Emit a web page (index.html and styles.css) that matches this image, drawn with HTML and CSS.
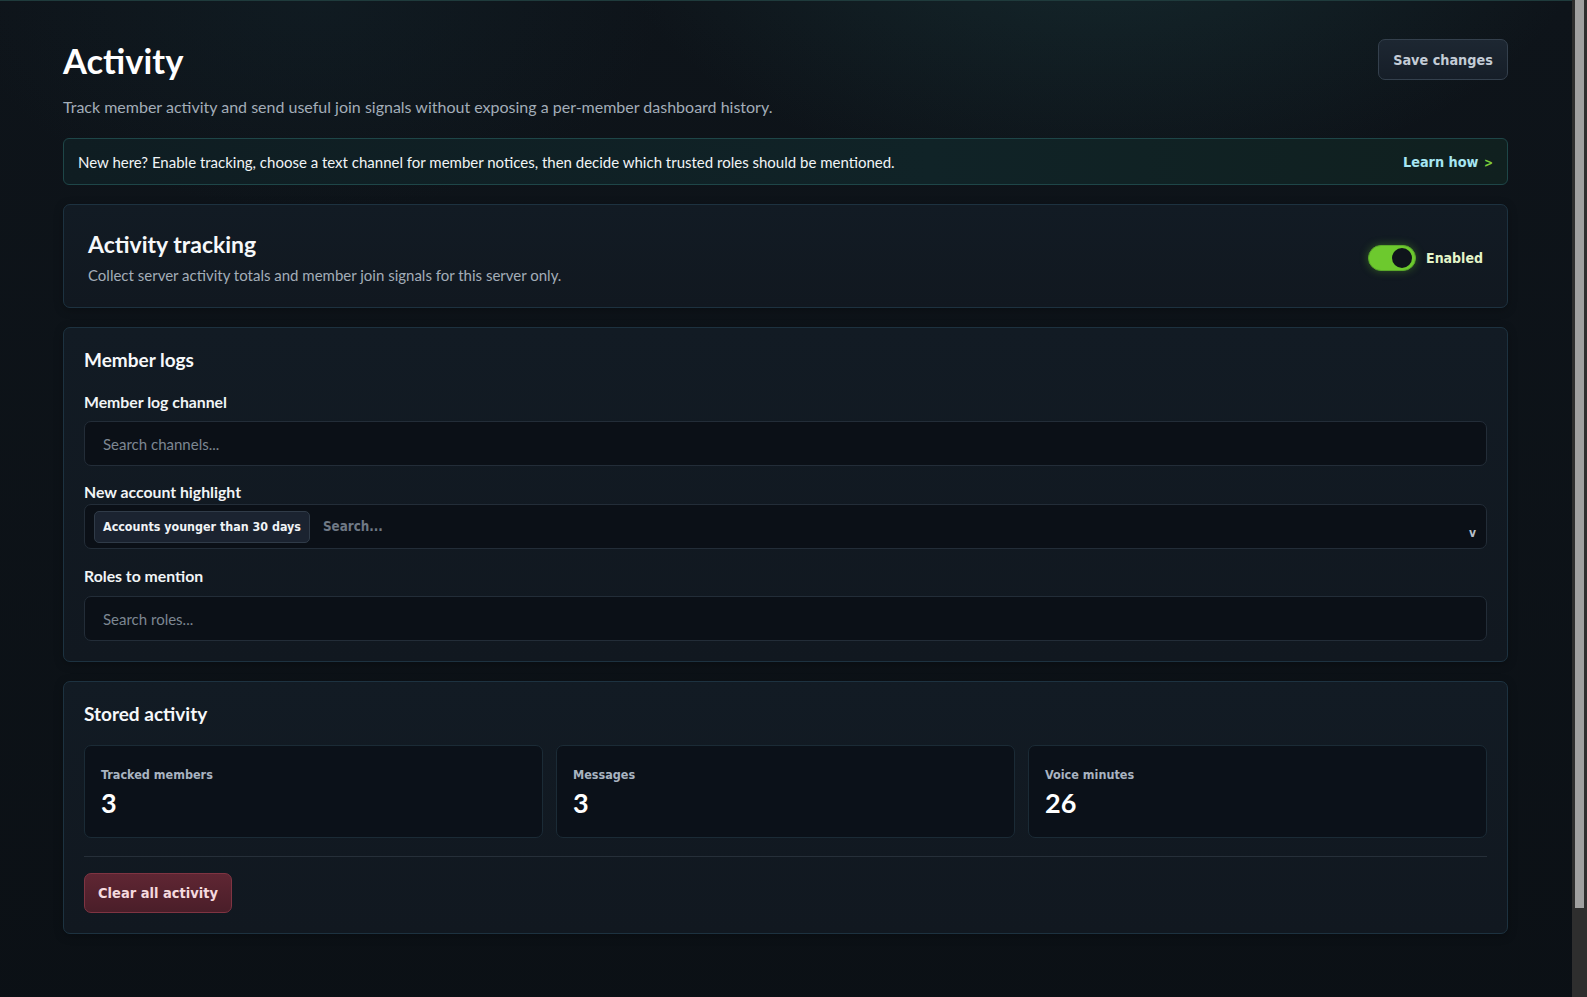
FILE: index.html
```html
<!DOCTYPE html>
<html lang="en">
<head>
    <meta charset="UTF-8">
    <meta name="viewport" content="width=device-width, initial-scale=1.0">
    <title>Activity</title>
    <link rel="stylesheet" href="styles.css">
</head>
<body>

    <main class="page">
        <header class="page-head">
            <div>
                <h1 class="page-title">Activity</h1>
                <p class="lead">Track member activity and send useful join signals without exposing a per-member dashboard history.</p>
            </div>
            <button class="btn-save">Save changes</button>
        </header>

        <div class="notice">
            <span>New here? Enable tracking, choose a text channel for member notices, then decide which trusted roles should be mentioned.</span>
            <a class="learn-link" href="#">Learn how <span class="chev">&gt;</span></a>
        </div>

        <section class="card card-toggle">
            <div>
                <h2 class="card-title-lg">Activity tracking</h2>
                <p class="card-desc">Collect server activity totals and member join signals for this server only.</p>
            </div>
            <label class="switch-wrap">
                <span class="switch"><span class="knob"></span></span>
                <span class="switch-text">Enabled</span>
            </label>
        </section>

        <section class="card">
            <h3 class="card-title">Member logs</h3>

            <label class="field-label">Member log channel</label>
            <input class="field-input" type="text" placeholder="Search channels...">

            <label class="field-label tight">New account highlight</label>
            <div class="multi">
                <span class="chip">Accounts younger than 30 days</span>
                <input class="multi-input" type="text" placeholder="Search...">
                <span class="caret">v</span>
            </div>

            <label class="field-label after-multi">Roles to mention</label>
            <input class="field-input" type="text" placeholder="Search roles...">
        </section>

        <section class="card">
            <h3 class="card-title">Stored activity</h3>
            <div class="stats">
                <div class="stat">
                    <div class="stat-label">Tracked members</div>
                    <div class="stat-value">3</div>
                </div>
                <div class="stat">
                    <div class="stat-label">Messages</div>
                    <div class="stat-value">3</div>
                </div>
                <div class="stat">
                    <div class="stat-label">Voice minutes</div>
                    <div class="stat-value">26</div>
                </div>
            </div>
            <hr class="divider">
            <button class="btn-danger">Clear all activity</button>
        </section>
    </main>

</body>
</html>
```

FILE: styles.css
```css
/* the right strip stands in for the dark window scrollbar */
html {
    background:
        linear-gradient(#a0a0a0, #a0a0a0) right 3px top 0 / 9px 908px no-repeat,
        #2e2e2e;
}
body {
    margin: 0 15px 0 0;
    min-height: 1090px;
    font-family: "Lato", "Liberation Sans", sans-serif;
    color: #eef2f5;
    background:
        radial-gradient(ellipse 700px 380px at 70% -80px, rgba(34, 80, 82, 0.34), transparent 70%),
        radial-gradient(ellipse 500px 300px at 20% 0, rgba(20, 40, 48, 0.35), transparent 70%),
        linear-gradient(180deg, #0e141a 0%, #0b1015 100%);
    border-top: 1px solid #1f3b3c;
}
.page {
    padding: 37px 64px 60px 63px;
}
.page-head {
    display: flex;
    justify-content: space-between;
    align-items: flex-start;
}
.page-title {
    margin: 3px 0 0;
    font-size: 34.5px;
    line-height: 40px;
    font-weight: 700;
    color: #ffffff;
}
.lead {
    margin: 15px 0 0;
    font-size: 16px;
    line-height: 22px;
    color: #a3adb8;
}
.btn-save {
    margin-top: 1px;
    width: 130px;
    height: 41px;
    border: 1px solid #34404d;
    border-radius: 7px;
    background: linear-gradient(180deg, #1d2732, #161e28);
    color: #c3ccd6;
    font-family: "DejaVu Sans Condensed", "Liberation Sans", sans-serif;
    font-weight: 700;
    font-size: 14.3px;
    cursor: pointer;
}
.notice {
    margin-top: 20px;
    height: 47px;
    box-sizing: border-box;
    display: flex;
    align-items: center;
    justify-content: space-between;
    padding: 0 14px 0 14px;
    border: 1px solid #1e4648;
    border-radius: 6px;
    background: linear-gradient(90deg, #0f1d22, #102327 60%, #10201f);
    font-size: 15px;
    color: #f1f4f6;
}
.learn-link {
    color: #a6e6f2;
    text-decoration: none;
    font-family: "DejaVu Sans Condensed", "Liberation Sans", sans-serif;
    font-weight: 700;
    font-size: 14.3px;
}
.chev {
    color: #7ccf3a;
    margin-left: 1px;
    font-size: 12px;
}
.card {
    margin-top: 19px;
    padding: 20px;
    border: 1px solid #1d3240;
    border-radius: 7px;
    background: linear-gradient(180deg, #121b24, #111820);
    box-shadow: 0 2px 10px rgba(0, 0, 0, 0.25);
}
.card-toggle {
    display: flex;
    align-items: center;
    justify-content: space-between;
    padding: 25px 24px 22px 24px;
}
.card-title-lg {
    margin: 0;
    font-size: 23px;
    line-height: 28px;
    font-weight: 700;
    color: #f6f8fa;
}
.card-desc {
    margin: 7px 0 0;
    font-size: 15px;
    line-height: 20px;
    color: #a3adb8;
}
.switch-wrap {
    display: flex;
    align-items: center;
    gap: 10px;
}
.switch {
    width: 48px;
    height: 26px;
    box-sizing: border-box;
    border-radius: 13px;
    background: #6dc92e;
    border: 1px solid #5aa82a;
    box-shadow: 0 0 8px rgba(109, 201, 46, 0.35);
    display: flex;
    align-items: center;
    justify-content: flex-end;
    padding: 0 3px;
}
.knob {
    width: 20px;
    height: 20px;
    border-radius: 50%;
    background: #0f141b;
}
.switch-text {
    font-family: "DejaVu Sans Condensed", "Liberation Sans", sans-serif;
    font-weight: 700;
    font-size: 14px;
    color: #e4f5c9;
}
.card-title {
    margin: 0;
    font-size: 19px;
    line-height: 24px;
    font-weight: 700;
    color: #f6f8fa;
}
.field-label {
    display: block;
    margin: 20px 0 9px;
    font-size: 15.8px;
    line-height: 20px;
    font-weight: 700;
    color: #f1f4f6;
}
.field-label.tight {
    margin: 16px 0 2px;
}
.field-label.after-multi {
    margin: 17px 0 10px;
}
.field-input {
    display: block;
    width: 100%;
    height: 45px;
    box-sizing: border-box;
    padding: 0 18px;
    border: 1px solid #232d38;
    border-radius: 7px;
    background: #0b1017;
    color: #eef2f5;
    font-family: "Lato", "Liberation Sans", sans-serif;
    font-size: 15px;
}
.field-input::placeholder {
    color: #7d8792;
}
.multi {
    display: flex;
    align-items: center;
    height: 45px;
    box-sizing: border-box;
    padding: 0 10px 0 9px;
    border: 1px solid #232d38;
    border-radius: 7px;
    background: #0b1017;
}
.chip {
    height: 32px;
    box-sizing: border-box;
    display: flex;
    align-items: center;
    padding: 0 8px;
    border: 1px solid #303b48;
    border-radius: 5px;
    background: #1b2330;
    font-family: "DejaVu Sans Condensed", "Liberation Sans", sans-serif;
    font-weight: 700;
    font-size: 12.4px;
    color: #f0f3f6;
    white-space: nowrap;
}
.multi-input {
    flex: 1;
    margin-left: 11px;
    border: none;
    background: transparent;
    outline: none;
    font-family: "DejaVu Sans Condensed", "Liberation Sans", sans-serif;
    font-weight: 700;
    font-size: 13.3px;
    color: #eef2f5;
}
.multi-input::placeholder {
    color: #6f7985;
}
.caret {
    margin-top: 12px;
    font-family: "DejaVu Sans Condensed", "Liberation Sans", sans-serif;
    font-weight: 700;
    font-size: 12px;
    color: #b8c0c9;
}
.stats {
    margin-top: 19px;
    display: grid;
    grid-template-columns: repeat(3, 1fr);
    gap: 13px;
}
.stat {
    height: 93px;
    box-sizing: border-box;
    padding: 20px 16px 0;
    border: 1px solid #1b2b36;
    border-radius: 7px;
    background: #0b1119;
}
.stat-label {
    font-family: "DejaVu Sans Condensed", "Liberation Sans", sans-serif;
    font-weight: 700;
    font-size: 12.5px;
    line-height: 18px;
    color: #a9b4c1;
}
.stat-value {
    margin-top: 3px;
    font-size: 27px;
    line-height: 32px;
    font-weight: 700;
    color: #ffffff;
}
.divider {
    margin: 18px 0 16px;
    border: none;
    border-top: 1px solid #262f39;
}
.btn-danger {
    display: block;
    width: 148px;
    height: 40px;
    border: 1px solid #7f3442;
    border-radius: 7px;
    background: linear-gradient(180deg, #5f2633, #4a1e29);
    color: #f5d9de;
    font-family: "DejaVu Sans Condensed", "Liberation Sans", sans-serif;
    font-weight: 700;
    font-size: 14.5px;
    cursor: pointer;
}
```
